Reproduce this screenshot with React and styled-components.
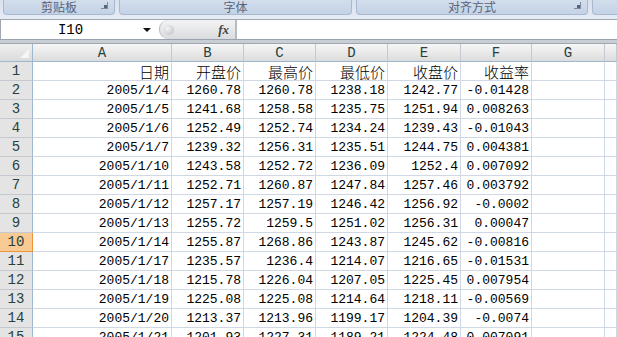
import styled, { createGlobalStyle } from 'styled-components';

const GlobalStyle = createGlobalStyle`
  html, body {
    margin: 0;
    padding: 0;
    background: #ffffff;
    overflow: hidden;
  }
  body {
    width: 617px;
    height: 337px;
    font-family: "Liberation Mono", "Noto Sans CJK SC", monospace;
  }
`;

const Page = styled.div`
  width: 617px;
  height: 337px;
  overflow: hidden;
  background: #ffffff;
`;

const Ribbon = styled.div`
  height: 19px;
  display: flex;
  gap: 4px;
  padding: 0 0 0 3px;
  background: linear-gradient(#d7e1ee, #e6ecf5);
  box-sizing: border-box;
`;

const Group = styled.div`
  position: relative;
  width: ${(p) => p.$w}px;
  flex-shrink: 0;
  height: 15px;
  box-sizing: border-box;
  border: 1px solid #a9b9cf;
  border-top: none;
  border-radius: 0 0 4px 4px;
  background: linear-gradient(#d3deec, #c3d2e6);
  color: #56637a;
  font-family: "Noto Sans CJK SC", sans-serif;
  font-size: 12px;
  line-height: 14px;
  text-align: center;
`;

const Launcher = styled.span`
  position: absolute;
  right: 6px;
  top: 2px;
  width: 6px;
  height: 6px;
  border-right: 1px solid #7c8ba0;
  border-bottom: 1px solid #7c8ba0;
  &::after {
    content: '';
    position: absolute;
    right: 0;
    bottom: 0;
    width: 3px;
    height: 3px;
    background: #55657d;
  }
`;

const FormulaBar = styled.div`
  height: 21px;
  display: flex;
  align-items: stretch;
  border-top: 1px solid #a0a7b0;
  border-bottom: 1px solid #9aa3ad;
  box-sizing: border-box;
  background: #ffffff;
`;

const NameBox = styled.div`
  width: 156px;
  flex-shrink: 0;
  position: relative;
  display: flex;
  align-items: center;
  justify-content: center;
  padding-right: 16px;
  box-sizing: border-box;
  font-size: 14px;
  color: #000;
  border-left: 1px solid #a0a7b0;
`;

const DropArrow = styled.span`
  position: absolute;
  right: 5px;
  top: 8px;
  width: 0;
  height: 0;
  border-left: 4px solid transparent;
  border-right: 4px solid transparent;
  border-top: 4px solid #111;
`;

const FxBox = styled.div`
  width: 77px;
  flex-shrink: 0;
  margin: 0 0 0 3px;
  position: relative;
  border: 1px solid #b4bcc6;
  border-top: none;
  border-bottom: none;
  border-radius: 9px 0 0 9px;
  background: linear-gradient(#f4f4f4, #d9dbde);
  box-sizing: border-box;
  display: flex;
  align-items: center;
  justify-content: flex-end;
  padding-right: 6px;
  font-family: "Liberation Serif", serif;
  font-style: italic;
  font-weight: bold;
  font-size: 13px;
  color: #444;
`;

const Knob = styled.span`
  position: absolute;
  left: 4px;
  top: 5px;
  width: 10px;
  height: 10px;
  border-radius: 50%;
  background: radial-gradient(circle at 35% 35%, #f4f4f4, #b9bcc0);
`;

const FormulaInput = styled.div`
  flex: 1;
  border-left: 1px solid #b4bcc6;
`;

const Divider = styled.div`
  height: 4px;
  background: #c9ced4;
  border-bottom: 1px solid #9ea6b0;
  box-sizing: border-box;
`;

const Sheet = styled.div`
  display: grid;
  grid-template-columns: 33px 139px 72px 72px 72px 73px 71px 73px 1fr;
  grid-auto-rows: 19px;
  grid-template-rows: 18px;
`;

const Corner = styled.div`
  background: linear-gradient(#f0f0f0, #dadada);
  border-right: 1px solid #9eb6ce;
  border-bottom: 1px solid #9eb6ce;
  box-sizing: border-box;
  position: relative;
  &::after {
    content: '';
    position: absolute;
    right: 3px;
    bottom: 3px;
    border-left: 9px solid transparent;
    border-bottom: 9px solid #f6f6f6;
  }
`;

const ColHead = styled.div`
  background: linear-gradient(#f6f6f6, #dcdcdc);
  border-right: 1px solid #c5c9cf;
  border-bottom: 1px solid #9eb6ce;
  box-sizing: border-box;
  display: flex;
  align-items: center;
  justify-content: center;
  font-size: 14px;
  color: #27413e;
`;

const RowHead = styled.div`
  background: ${(p) => (p.$active ? '#f8ca94' : '#e4e4e4')};
  border-right: 1px solid ${(p) => (p.$active ? '#f29436' : '#9eb6ce')};
  border-bottom: 1px solid ${(p) => (p.$active ? '#f29436' : '#c5c9cf')};
  box-sizing: border-box;
  display: flex;
  align-items: center;
  justify-content: center;
  font-size: 14px;
  color: #27413e;
`;

const Cell = styled.div`
  border-right: 1px solid #d0d7e5;
  border-bottom: 1px solid #d0d7e5;
  box-sizing: border-box;
  display: flex;
  align-items: center;
  justify-content: flex-end;
  padding-right: 2px;
  font-size: 13px;
  color: #000;
  white-space: nowrap;
  overflow: hidden;
`;

const Cjk = styled.span`
  font-family: "Noto Sans CJK SC", sans-serif;
  font-size: 15px;
  line-height: 17px;
  font-weight: 300;
`;

const cols = ['A', 'B', 'C', 'D', 'E', 'F', 'G'];

const rows = [
  ['日期', '开盘价', '最高价', '最低价', '收盘价', '收益率'],
  ['2005/1/4', '1260.78', '1260.78', '1238.18', '1242.77', '-0.01428'],
  ['2005/1/5', '1241.68', '1258.58', '1235.75', '1251.94', '0.008263'],
  ['2005/1/6', '1252.49', '1252.74', '1234.24', '1239.43', '-0.01043'],
  ['2005/1/7', '1239.32', '1256.31', '1235.51', '1244.75', '0.004381'],
  ['2005/1/10', '1243.58', '1252.72', '1236.09', '1252.4', '0.007092'],
  ['2005/1/11', '1252.71', '1260.87', '1247.84', '1257.46', '0.003792'],
  ['2005/1/12', '1257.17', '1257.19', '1246.42', '1256.92', '-0.0002'],
  ['2005/1/13', '1255.72', '1259.5', '1251.02', '1256.31', '0.00047'],
  ['2005/1/14', '1255.87', '1268.86', '1243.87', '1245.62', '-0.00816'],
  ['2005/1/17', '1235.57', '1236.4', '1214.07', '1216.65', '-0.01531'],
  ['2005/1/18', '1215.78', '1226.04', '1207.05', '1225.45', '0.007954'],
  ['2005/1/19', '1225.08', '1225.08', '1214.64', '1218.11', '-0.00569'],
  ['2005/1/20', '1213.37', '1213.96', '1199.17', '1204.39', '-0.0074'],
  ['2005/1/21', '1201.93', '1227.31', '1189.21', '1224.48', '0.007091'],
];

export default function App() {
  return (
    <Page>
      <GlobalStyle />
      <Ribbon>
        <Group $w={112}>
          剪贴板
          <Launcher />
        </Group>
        <Group $w={233}>字体</Group>
        <Group $w={232}>
          对齐方式
          <Launcher />
        </Group>
        <Group $w={60} />
      </Ribbon>
      <FormulaBar>
        <NameBox>
          I10
          <DropArrow />
        </NameBox>
        <FxBox>
          <Knob />
          fx
        </FxBox>
        <FormulaInput />
      </FormulaBar>
      <Divider />
      <Sheet>
        <Corner />
        {cols.map((c) => (
          <ColHead key={c}>{c}</ColHead>
        ))}
        <ColHead />
        {rows.map((r, i) => (
          <Row key={i} n={i + 1} values={r} />
        ))}
      </Sheet>
    </Page>
  );
}

function Row({ n, values }) {
  return (
    <>
      <RowHead $active={n === 10}>{n}</RowHead>
      {values.map((v, j) => (
        <Cell key={j}>{n === 1 ? <Cjk>{v}</Cjk> : v}</Cell>
      ))}
      <Cell />
      <Cell />
    </>
  );
}
